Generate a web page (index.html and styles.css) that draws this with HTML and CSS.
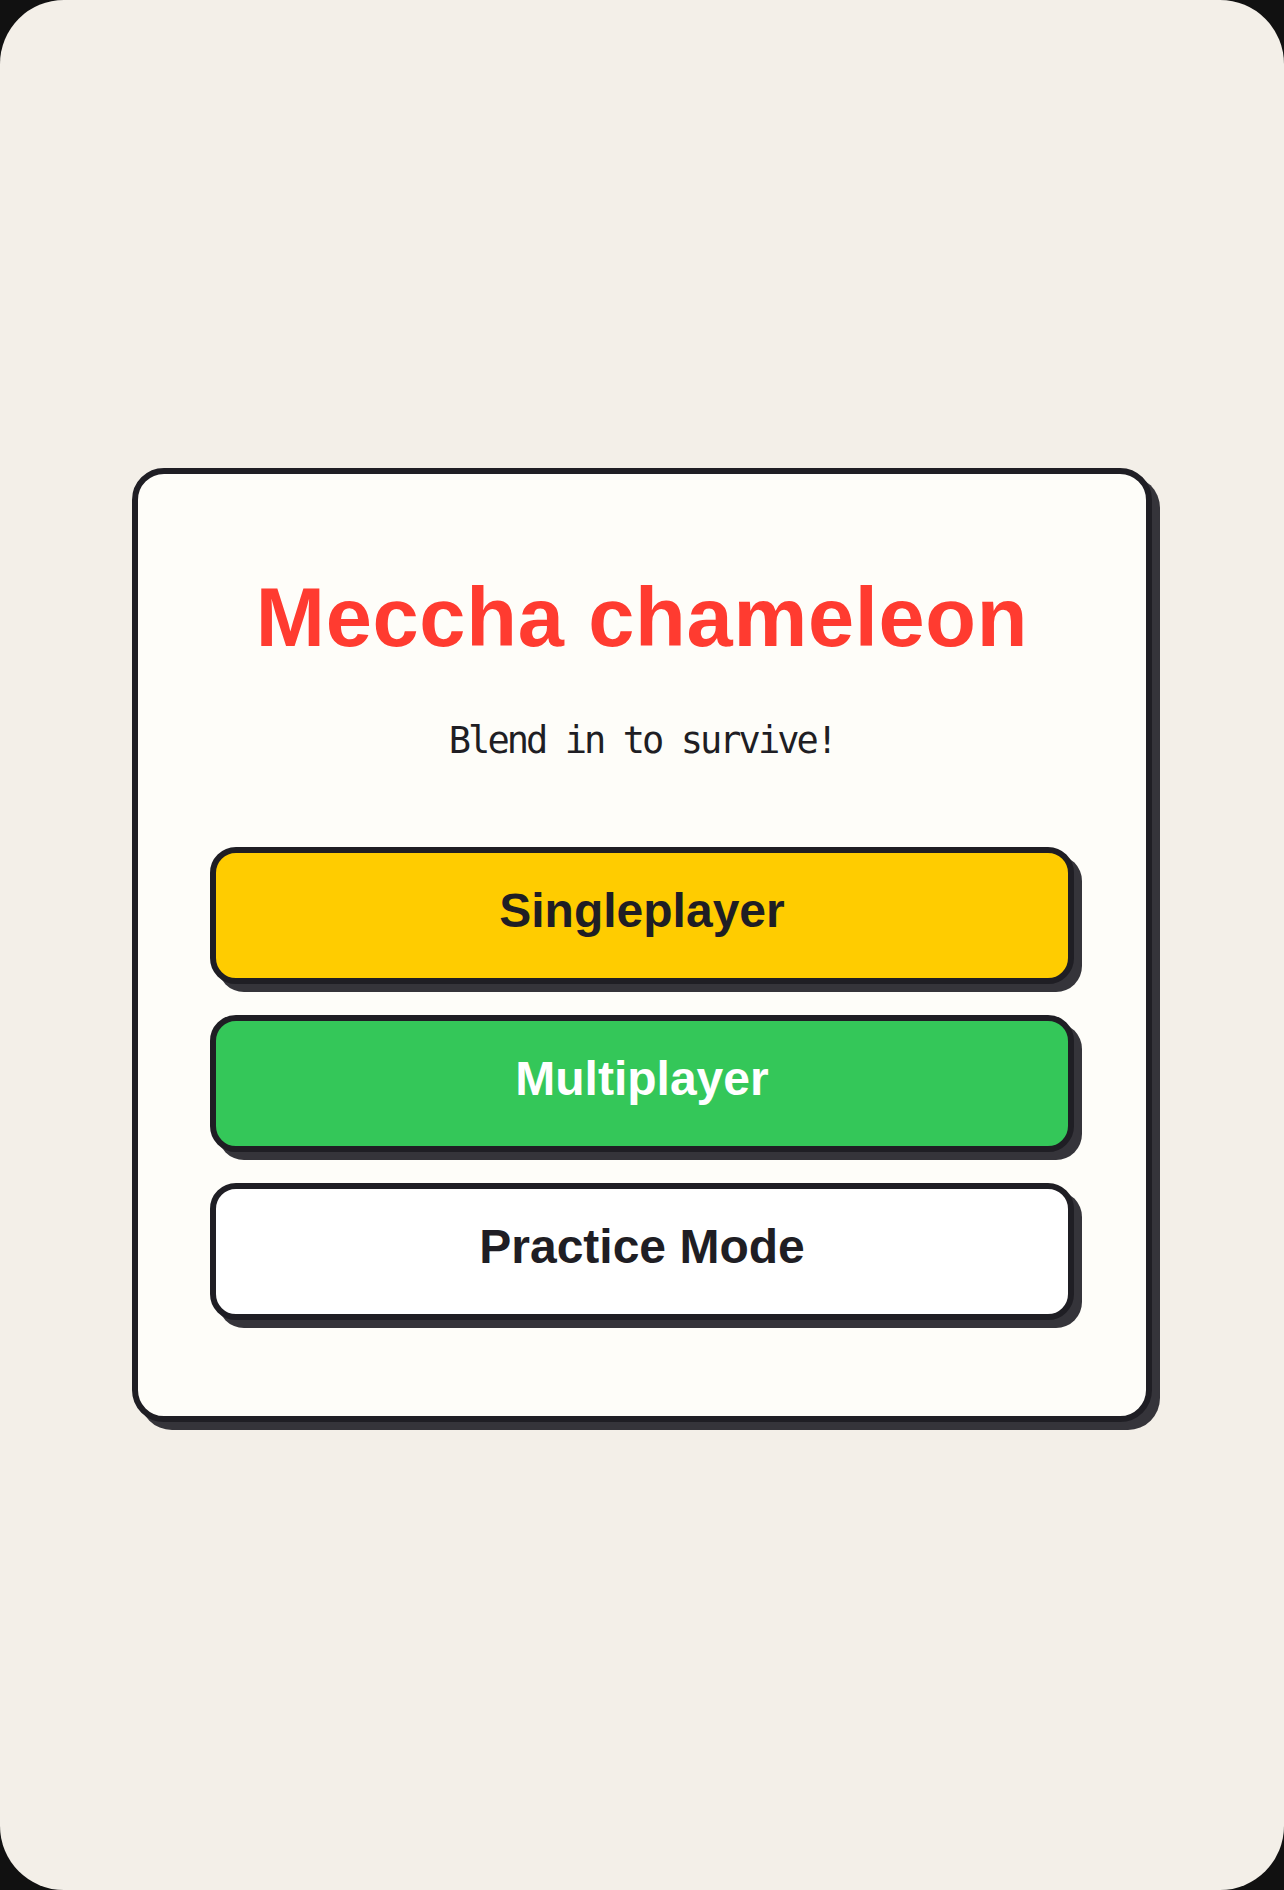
FILE: index.html
```html
<!DOCTYPE html>
<html lang="en">
<head>
<meta charset="utf-8">
<title>Meccha chameleon</title>
<link rel="stylesheet" href="styles.css">
</head>
<body>
<div class="frame">
  <main class="card">
    <h1 class="title">Meccha chameleon</h1>
    <p class="subtitle">Blend in to survive!</p>
    <div class="menu">
      <button class="btn btn-yellow">Singleplayer</button>
      <button class="btn btn-green">Multiplayer</button>
      <button class="btn btn-white">Practice Mode</button>
    </div>
  </main>
</div>
</body>
</html>
```

FILE: styles.css
```css
html, body {
  margin: 0;
  padding: 0;
  background: #111111;
}

.frame {
  width: 1284px;
  height: 1890px;
  box-sizing: border-box;
  background: #f3efe8;
  border-radius: 64px;
  display: flex;
  align-items: center;
  justify-content: center;
  font-family: "Liberation Sans", Arial, sans-serif;
}

.card {
  width: 1020px;
  box-sizing: border-box;
  background: #fefdf9;
  border: 6px solid #1f1e24;
  border-radius: 32px;
  box-shadow: 8px 8px 0 #35343a;
  padding: 96px 72px;
  display: flex;
  flex-direction: column;
  align-items: stretch;
  text-align: center;
}

.title {
  margin: 0;
  font-size: 83px;
  font-weight: 700;
  line-height: normal;
  letter-spacing: 0.7px;
  color: #ff3b30;
}

.subtitle {
  margin: 53px 0 0;
  font-family: "DejaVu Sans Mono", monospace;
  font-size: 37px;
  letter-spacing: -2.95px;
  line-height: normal;
  color: #1f1e24;
}

.menu {
  margin-top: 85px;
  display: flex;
  flex-direction: column;
  gap: 31px;
}

.btn {
  display: block;
  width: 100%;
  box-sizing: border-box;
  height: 137px;
  border: 6px solid #1f1e24;
  border-radius: 26px;
  box-shadow: 8px 8px 0 #35343a;
  font-family: "Liberation Sans", Arial, sans-serif;
  font-size: 48px;
  font-weight: 700;
  color: #1f1e24;
  padding: 0 0 10px;
  cursor: pointer;
}

.btn-yellow {
  background: #ffcc00;
}

.btn-green {
  background: #34c759;
  color: #ffffff;
}

.btn-white {
  background: #ffffff;
}
```
